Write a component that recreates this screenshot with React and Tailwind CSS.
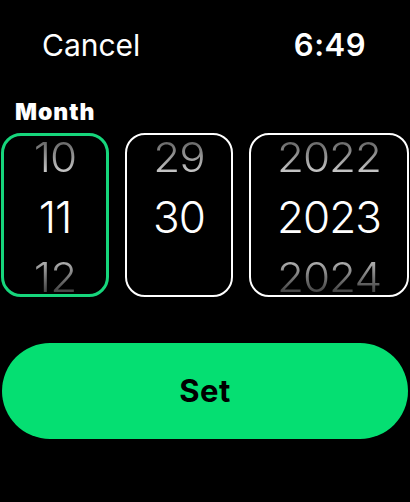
import React from "react";

const font = { fontFamily: "Inter, 'Liberation Sans', sans-serif" };

function Wheel({ top, mid, bottom, width, active }) {
  return (
    <div
      className={`flex h-[164px] ${width} flex-col items-center justify-center overflow-hidden rounded-[20px] pt-[3px] ${
        active ? "border-[3px] border-[#16d67c]" : "border-2 border-white"
      }`}
    >
      <div className="flex h-[60px] shrink-0 items-center justify-center text-[44px] font-light leading-none tracking-[-1px]">
        <span className="inline-block scale-y-[0.93] bg-linear-to-b from-[#5a5a5a] to-[#d8d8d8] bg-clip-text text-transparent">
          {top}
        </span>
      </div>
      <div className="flex h-[60px] shrink-0 items-center justify-center text-[44px] font-light leading-none tracking-[-1px] text-white">
        {mid}
      </div>
      <div className="flex h-[60px] shrink-0 items-center justify-center text-[44px] font-light leading-none tracking-[-1px]">
        {bottom ? (
          <span className="inline-block scale-y-[0.93] bg-linear-to-b from-[#c4c4c4] to-[#333333] bg-clip-text text-transparent">
            {bottom}
          </span>
        ) : (
          <span>&nbsp;</span>
        )}
      </div>
    </div>
  );
}

export default function App() {
  return (
    <div className="h-[502px] w-[410px] bg-black text-white" style={font}>
      <div className="flex items-center justify-between pl-[42px] pr-[44px] pt-[27px]">
        <span className="text-[30px] font-normal leading-[36px]">Cancel</span>
        <span className="text-[31px] font-semibold leading-[36px] tracking-[0.5px]">6:49</span>
      </div>
      <div className="mt-[36px] pl-[15px] text-[23px] font-black leading-[27px] tracking-[1px]">
        Month
      </div>
      <div className="mt-[7px] flex gap-4 pl-px">
        <Wheel top="10" mid="11" bottom="12" width="w-[108px]" active />
        <Wheel top="29" mid="30" width="w-[108px]" />
        <Wheel top="2022" mid="2023" bottom="2024" width="w-[160px]" />
      </div>
      <div className="mt-[46px] px-[2px]">
        <button className="flex h-[96px] w-full items-center justify-center rounded-full bg-[#05df72] text-[31px] font-bold tracking-[0.5px] text-black">
          Set
        </button>
      </div>
    </div>
  );
}
